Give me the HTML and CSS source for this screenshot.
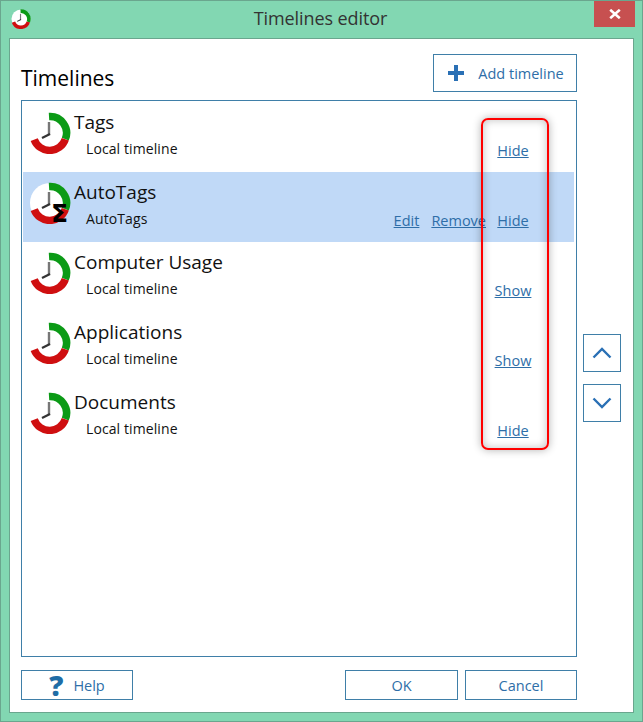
FILE: index.html
```html
<!DOCTYPE html>
<html lang="en">
<head>
<meta charset="utf-8">
<title>Timelines editor</title>
<link rel="stylesheet" href="styles.css">
</head>
<body>
<svg class="defs" width="0" height="0" aria-hidden="true">
  <symbol id="clock" viewBox="0 0 42 42">
    <circle cx="21" cy="21" r="20" fill="#fff"/>
    <path d="M20 4.5A16.5 16.5 0 0 1 36.3 27.2" fill="none" stroke="#0b9a16" stroke-width="7.5"/>
    <path d="M36.3 27.2A16.5 16.5 0 0 1 5.2 27.6" fill="none" stroke="#cf0f10" stroke-width="7.5"/>
    <path d="M20 10V23" fill="none" stroke="#777" stroke-width="2.4"/>
    <path d="M21 22L13 26" fill="none" stroke="#333" stroke-width="2.2"/>
  </symbol>
</svg>
<div class="window">
  <header class="titlebar">
    <svg class="title-icon"><use href="#clock"/></svg>
    <span class="title-text">Timelines editor</span>
    <button class="close" aria-label="Close">
      <svg width="12" height="10" viewBox="0 0 12 10"><path d="M1.2 0.8L10.8 9.2M10.8 0.8L1.2 9.2" stroke="#fff" stroke-width="2.6"/></svg>
    </button>
  </header>
  <main class="content">
    <div class="head">
      <h1 class="heading">Timelines</h1>
      <button class="btn add">
        <svg width="18" height="18" viewBox="0 0 18 18"><path d="M9 1V17M1 9H17" stroke="#2a70b5" stroke-width="4"/></svg>
        <span>Add timeline</span>
      </button>
    </div>
    <div class="middle">
      <div class="list">
        <div class="row">
          <svg class="clock"><use href="#clock"/></svg>
          <div class="info"><div class="name">Tags</div><div class="sub">Local timeline</div></div>
          <div class="actions"><a class="link toggle" href="#">Hide</a></div>
        </div>
        <div class="row selected">
          <div class="clock-wrap"><svg class="clock"><use href="#clock"/></svg><span class="sigma">Σ</span></div>
          <div class="info"><div class="name">AutoTags</div><div class="sub">AutoTags</div></div>
          <div class="actions"><a class="link" href="#">Edit</a><a class="link remove" href="#">Remove</a><a class="link toggle" href="#">Hide</a></div>
        </div>
        <div class="row">
          <svg class="clock"><use href="#clock"/></svg>
          <div class="info"><div class="name">Computer Usage</div><div class="sub">Local timeline</div></div>
          <div class="actions"><a class="link toggle" href="#">Show</a></div>
        </div>
        <div class="row">
          <svg class="clock"><use href="#clock"/></svg>
          <div class="info"><div class="name">Applications</div><div class="sub">Local timeline</div></div>
          <div class="actions"><a class="link toggle" href="#">Show</a></div>
        </div>
        <div class="row">
          <svg class="clock"><use href="#clock"/></svg>
          <div class="info"><div class="name">Documents</div><div class="sub">Local timeline</div></div>
          <div class="actions"><a class="link toggle" href="#">Hide</a></div>
        </div>
      </div>
      <div class="arrows">
        <button class="btn arrow" aria-label="Move up"><svg width="20" height="12" viewBox="0 0 20 12"><path d="M1.5 10.5L10 2L18.5 10.5" fill="none" stroke="#2a70b5" stroke-width="2.4"/></svg></button>
        <button class="btn arrow" aria-label="Move down"><svg width="20" height="12" viewBox="0 0 20 12"><path d="M1.5 1.5L10 10L18.5 1.5" fill="none" stroke="#2a70b5" stroke-width="2.4"/></svg></button>
      </div>
    </div>
    <footer class="foot">
      <button class="btn help">
        <span class="q">?</span><span>Help</span>
      </button>
      <div class="foot-right">
        <button class="btn dialog">OK</button>
        <button class="btn dialog">Cancel</button>
      </div>
    </footer>
  </main>
  <div class="highlight"></div>
</div>
</body>
</html>
```
FILE: styles.css
```css
* { box-sizing: border-box; }
html, body { margin: 0; padding: 0; }
body { font-family: "Open Sans", "Noto Sans", sans-serif; background: #82d7b2; }
.defs { position: absolute; }
.window {
  position: relative;
  width: 643px;
  height: 722px;
  display: flex;
  flex-direction: column;
  background: #82d7b2;
  border: 1px solid #6aa68e;
  overflow: hidden;
}
.titlebar {
  height: 37px;
  flex: none;
  display: flex;
  align-items: flex-start;
  position: relative;
}
.title-icon { position: absolute; left: 10px; top: 8px; width: 20px; height: 20px; }
.title-text {
  flex: 1;
  text-align: center;
  font-size: 18px;
  line-height: 35px;
  color: #333;
  padding-right: 2px;
  letter-spacing: -0.08px;
}
.close {
  position: absolute;
  right: 7px;
  top: 0;
  width: 41px;
  height: 26px;
  border: 0;
  padding: 0;
  background: #c75050;
  display: flex;
  align-items: center;
  justify-content: center;
}
.content {
  flex: none;
  margin: 0 8px;
  width: 625px;
  height: 675px;
  background: #fff;
  border: 1px solid #6aa68e;
  padding: 15px 11px 12px;
  display: flex;
  flex-direction: column;
}
.head {
  width: 556px;
  height: 38px;
  display: flex;
  align-items: flex-end;
  justify-content: space-between;
  flex: none;
}
.heading { margin: 0; font-size: 21px; font-weight: 400; line-height: 28px; color: #000; }
.btn {
  background: #fff;
  border: 1px solid #3f7fa8;
  color: #2e6ea8;
  font-family: inherit;
  font-size: 14.5px;
  padding: 0;
  display: flex;
  align-items: center;
  justify-content: center;
}
.add { width: 144px; height: 38px; gap: 13px; padding-left: 1px; }
.middle { display: flex; flex: 1; gap: 6px; margin-top: 8px; min-height: 0; }
.list {
  width: 556px;
  height: 557px;
  border: 1px solid #3f7fa8;
  padding: 1px;
  flex: none;
}
.row {
  height: 70px;
  display: flex;
  position: relative;
  width: 551px;
}
.selected { background: #c0d9f7; }
.clock { width: 42px; height: 42px; display: block; flex: none; margin: 10px 3px 0 6px; }
.clock-wrap { position: relative; flex: none; width: 51px; }
.clock-wrap .clock { margin-right: 0; }
.sigma {
  position: absolute;
  left: 28px;
  top: 29px;
  font-family: "DejaVu Sans", sans-serif;
  font-weight: 700;
  font-size: 25px;
  line-height: 26px;
  color: #000;
}
.info { flex: 1; min-width: 0; }
.name { font-size: 19px; line-height: 26px; margin-top: 7px; color: #111; }
.sub { font-size: 14px; line-height: 20px; margin-top: 4px; margin-left: 12px; color: #111; letter-spacing: 0.1px; }
.actions { display: flex; align-items: baseline; padding-right: 34px; margin-top: 39px; height: 20px; }
.link { color: #2e6ea8; font-size: 14.5px; line-height: 20px; margin-right: 12px; }
.remove { margin-right: 0; }
.toggle { width: 54px; text-align: center; margin-right: 0; }
.arrows { display: flex; flex-direction: column; gap: 12px; margin-top: 234px; }
.arrow { width: 38px; height: 38px; }
.foot { display: flex; justify-content: space-between; height: 30px; width: 556px; flex: none; margin-top: 13px; }
.help { width: 112px; height: 30px; gap: 10px; }
.q { font-size: 28px; font-weight: 800; color: #1f6da6; line-height: 28px; font-family: "Open Sans", sans-serif; }
.foot-right { display: flex; gap: 7px; }
.dialog { width: 113px; height: 30px; }
.foot-right .dialog:last-child { width: 112px; }
.highlight {
  position: absolute;
  left: 480px;
  top: 117px;
  width: 68px;
  height: 332px;
  border: 2px solid #f00;
  border-radius: 7px;
  box-shadow: 0 0 8px rgba(0,0,0,.3), inset 0 0 8px rgba(0,0,0,.25);
  pointer-events: none;
}
```
